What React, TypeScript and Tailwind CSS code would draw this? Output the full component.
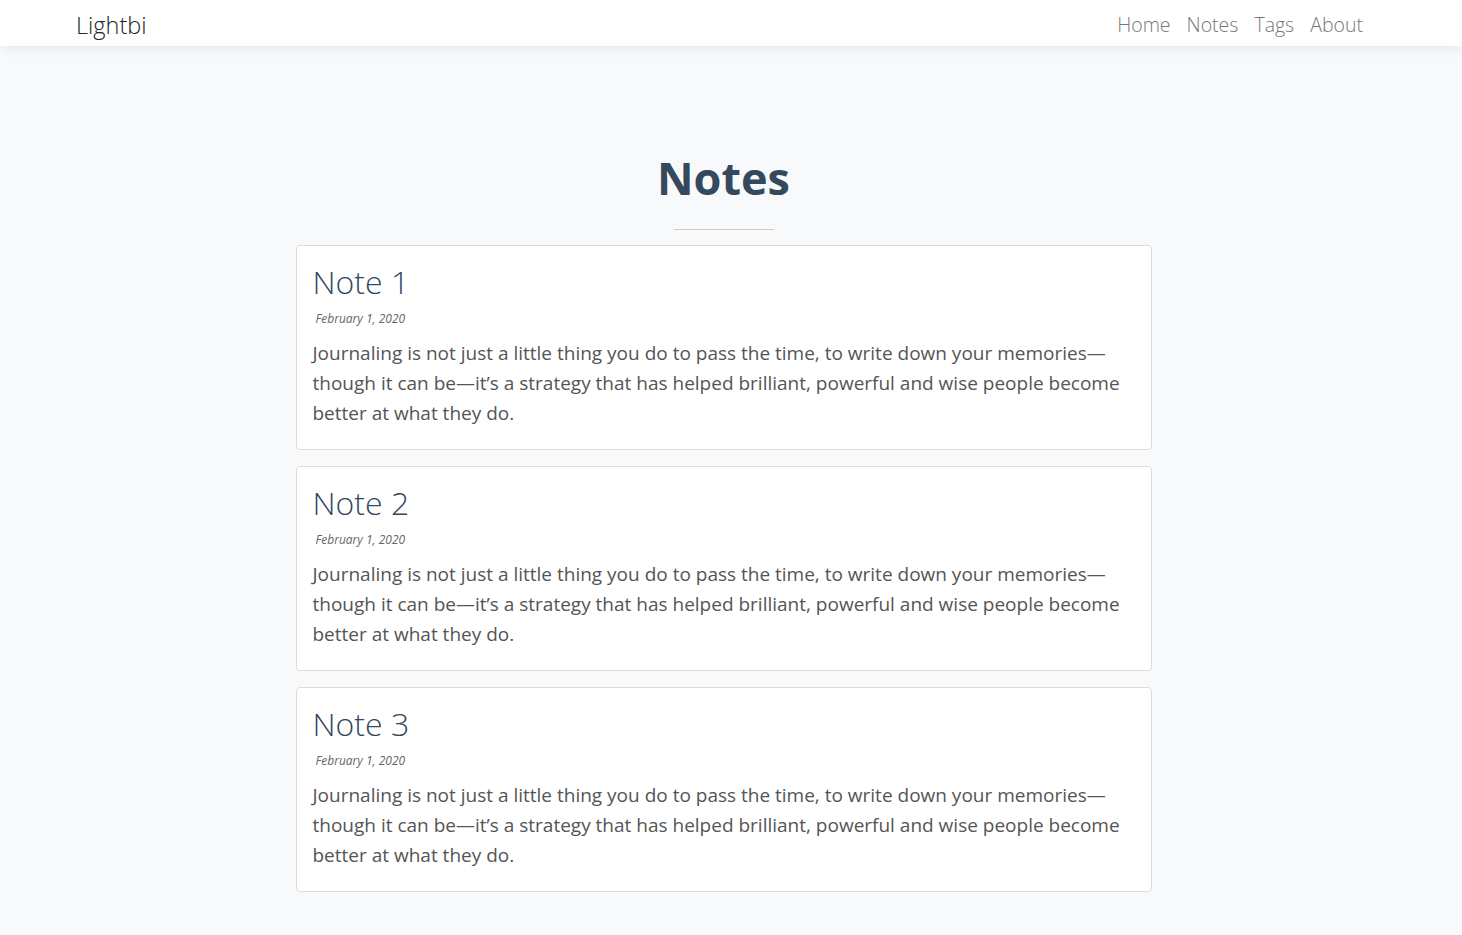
import React from "react";

const notes = [
  { id: 1, title: "Note 1", date: "February 1, 2020" },
  { id: 2, title: "Note 2", date: "February 1, 2020" },
  { id: 3, title: "Note 3", date: "February 1, 2020" },
];

const excerpt =
  "Journaling is not just a little thing you do to pass the time, to write down your memories\u2014though it can be\u2014it\u2019s a strategy that has helped brilliant, powerful and wise people become better at what they do.";

export default function App() {
  return (
    <div className="min-h-[935px] bg-[#f8f9fa] font-['Open_Sans',sans-serif]">
      {/* navbar */}
      <nav className="h-[46px] bg-white shadow-[0_2px_10px_rgba(0,0,0,0.08)] flex items-center justify-between pt-[3px] pl-[76px] pr-[99px]">
        <a className="text-[23.5px] font-light text-[#212529] leading-[40px]">Lightbi</a>
        <div className="flex items-center gap-[16px] text-[19.5px] font-light text-[#777] leading-[40px]">
          <a>Home</a>
          <a>Notes</a>
          <a>Tags</a>
          <a>About</a>
        </div>
      </nav>

      <main className="pr-[15px] pt-[100px] pb-[40px]">
        <div className="w-[856px] mx-auto">
          <h1 className="text-center text-[45px] leading-[64px] font-bold text-[#34495e]">Notes</h1>
          <hr className="w-[100px] mx-auto mt-[19px] mb-[15px] border-0 border-t border-[#ccc]" />

          <div className="flex flex-col gap-[16px]">
            {notes.map((note) => (
              <article key={note.id} className="bg-white border border-[#dcdcdc] rounded-[4px] px-[16px] pt-[16px] pb-[21px]">
                <h2 className="text-[32px] leading-[40px] font-light text-[#34495e]">{note.title}</h2>
                <p className="mt-[8px] ml-[3px] text-[12px] leading-[18px] italic text-[#666]">{note.date}</p>
                <p className="mt-[10px] text-[19px] leading-[30px] text-[#555]">{excerpt}</p>
              </article>
            ))}
          </div>
        </div>
      </main>
    </div>
  );
}
